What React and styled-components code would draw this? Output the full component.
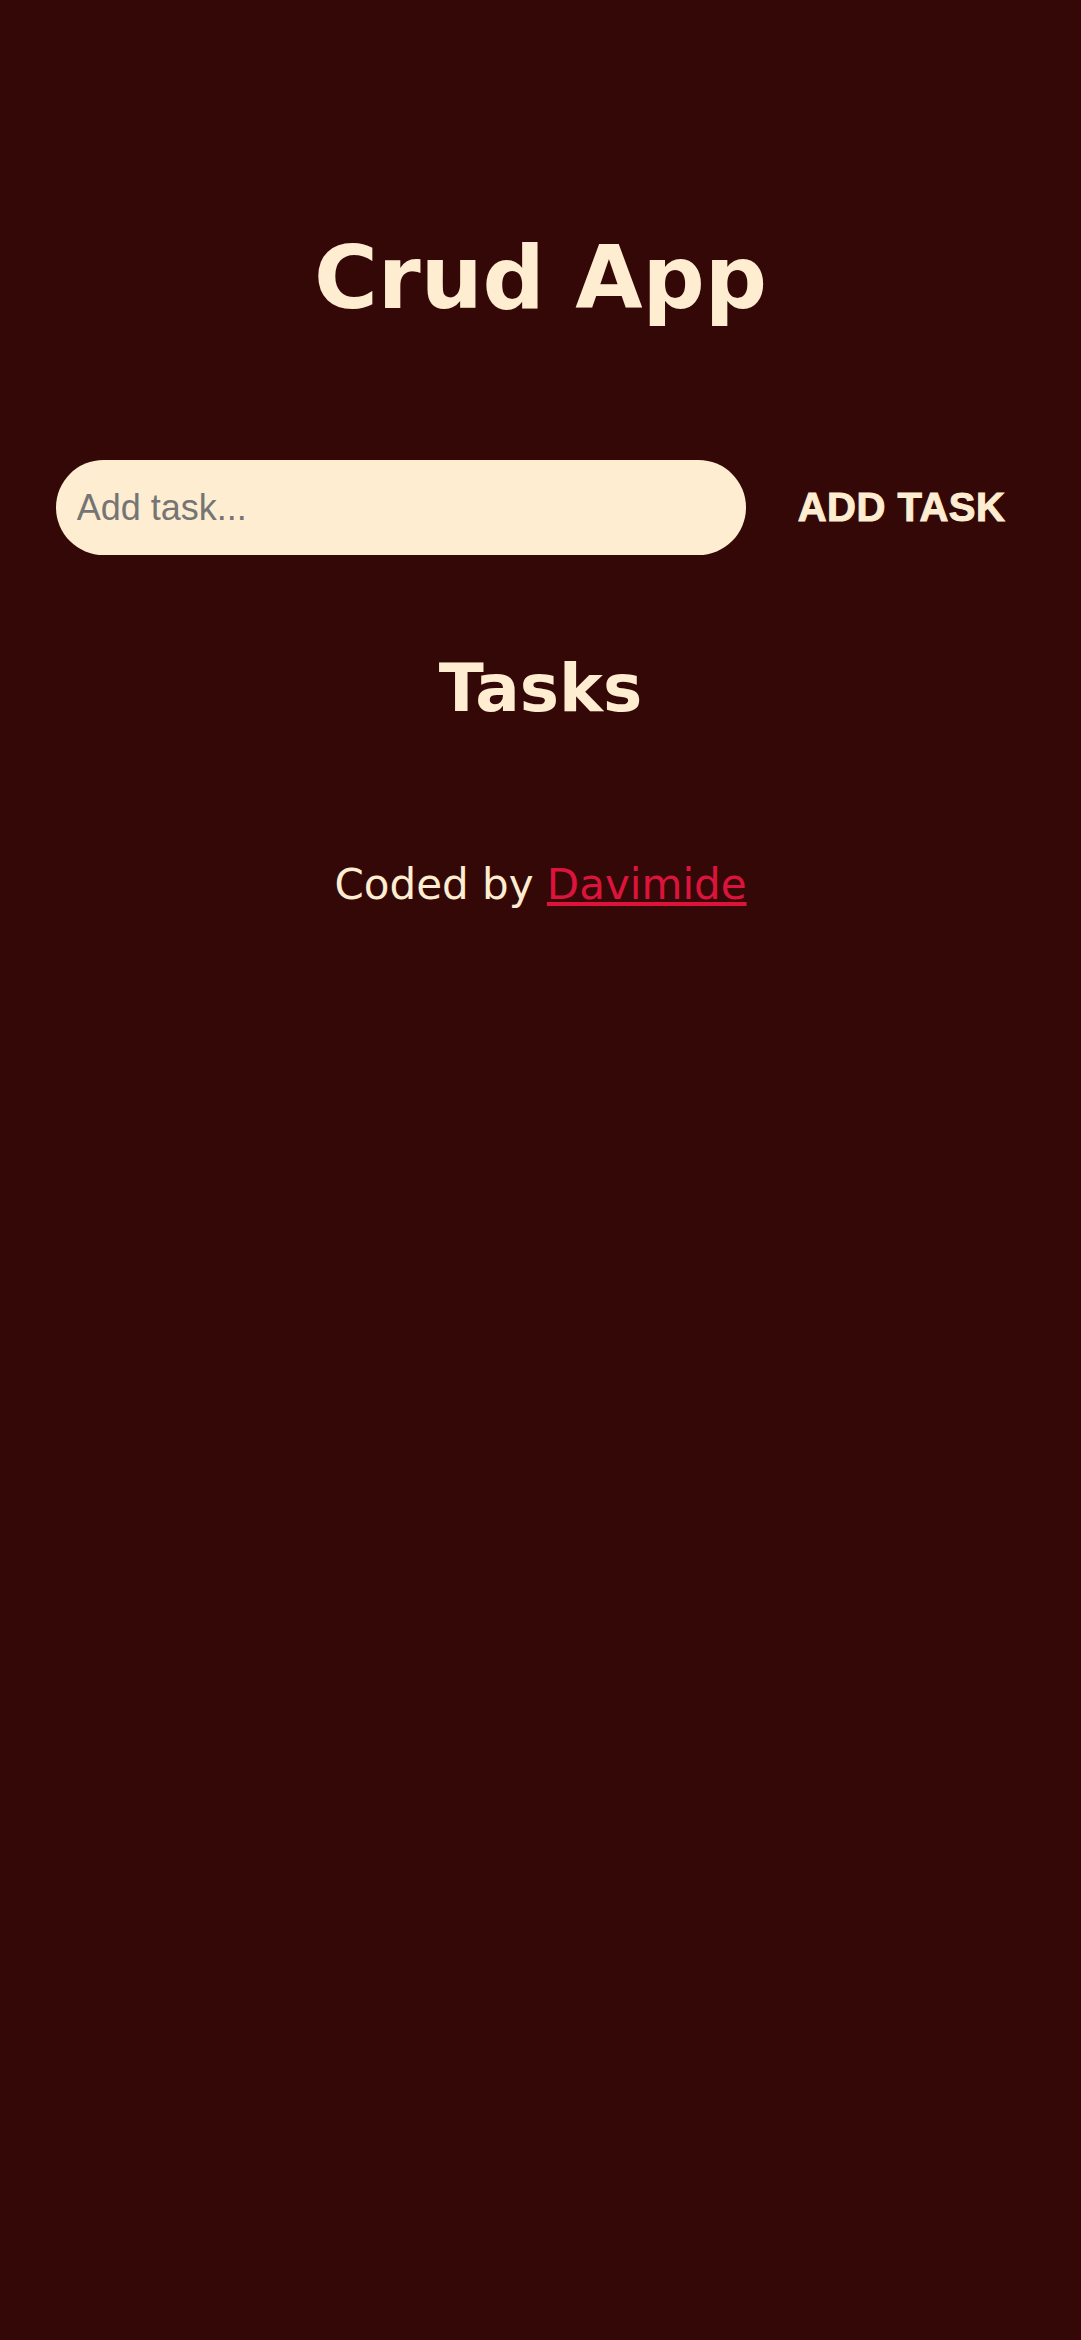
import React from 'react'
import styled, { createGlobalStyle } from 'styled-components'

const GlobalStyle = createGlobalStyle`
  html, body {
    margin: 0;
    padding: 0;
    background-color: #350808;
  }
  body {
    min-height: 2340px;
    font-family: 'DejaVu Sans', Verdana, sans-serif;
  }
`

const Container = styled.div`
  display: flex;
  flex-direction: column;
  align-items: center;
  padding-top: 226px;
  color: #ffedd1;
`

const Title = styled.h1`
  margin: 0;
  font-size: 87px;
  font-weight: 700;
  line-height: 1.2;
`

const Form = styled.form`
  display: flex;
  align-items: center;
  gap: 32px;
  margin-top: 130px;
`

const Input = styled.input`
  width: 690px;
  height: 95px;
  box-sizing: border-box;
  padding: 0 21px;
  border: none;
  border-radius: 48px;
  background-color: #ffedd1;
  font-family: 'Liberation Sans', Arial, sans-serif;
  font-size: 36px;
  color: #333;
  outline: none;

  ::placeholder {
    color: #757575;
  }
`

const AddButton = styled.button`
  padding: 10px 20px;
  border: none;
  background: transparent;
  color: #ffedd1;
  font-family: 'Liberation Sans', Arial, sans-serif;
  font-weight: 700;
  font-size: 40px;
  letter-spacing: 0.5px;
  -webkit-text-stroke: 1px #ffedd1;
  text-transform: uppercase;
  cursor: pointer;
`

const Heading = styled.h2`
  margin: 94px 0 0;
  font-size: 66px;
  font-weight: 700;
  line-height: 1.2;
`

const Footer = styled.p`
  margin: 131px 0 0;
  font-size: 42px;
  color: #ffedd1;
`

const Link = styled.a`
  color: #dc143c;
  text-decoration: underline;
`

const App = () => {
    const [task, setTask] = React.useState('')

    return (
        <>
            <GlobalStyle />
            <Container>
                <Title>Crud App</Title>
                <Form onSubmit={(e) => e.preventDefault()}>
                    <Input
                        type='text'
                        placeholder='Add task...'
                        value={task}
                        onChange={(e) => setTask(e.target.value)}
                    />
                    <AddButton type='submit'>Add task</AddButton>
                </Form>
                <Heading>Tasks</Heading>
                {/* task list goes here */}
                <Footer>
                    Coded by <Link href='#'>Davimide</Link>
                </Footer>
            </Container>
        </>
    )
}

export default App
